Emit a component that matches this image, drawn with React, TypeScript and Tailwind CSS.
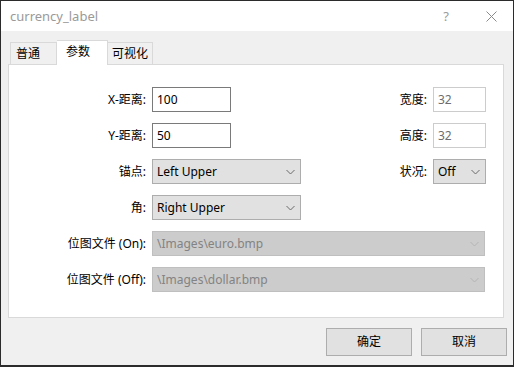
import React from 'react';

const Chevron: React.FC<{ disabled?: boolean }> = ({ disabled }) => (
  <svg width="9" height="6" viewBox="0 0 9 6" className="shrink-0">
    <path
      d="M0.5 1 L4.5 5 L8.5 1"
      fill="none"
      stroke={disabled ? '#b4b4b4' : '#6a6a6a'}
      strokeWidth="1"
    />
  </svg>
);

const Label: React.FC<{ text: string; className?: string }> = ({ text, className }) => (
  <div className={`text-right text-black ${className ?? ''}`}>{text}</div>
);

const TextBox: React.FC<{ value: string; width: string; disabled?: boolean }> = ({
  value,
  width,
  disabled,
}) => (
  <div
    className={`${width} h-[25px] flex items-center pl-[4px] bg-white border ${
      disabled ? 'border-[#cccccc] text-[#6d6d6d]' : 'border-[#7a7a7a] text-black'
    }`}
  >
    {value}
  </div>
);

const Combo: React.FC<{ value: string; width: string; disabled?: boolean }> = ({
  value,
  width,
  disabled,
}) => (
  <div
    className={`${width} h-[25px] flex items-center justify-between pl-[4px] pr-[5px] border ${
      disabled
        ? 'bg-[#cccccc] border-[#bfbfbf] text-[#838383]'
        : 'bg-[#e1e1e1] border-[#adadad] text-black'
    }`}
  >
    <span>{value}</span>
    <Chevron disabled={disabled} />
  </div>
);

const App: React.FC = () => {
  return (
    <div
      className="w-[514px] h-[367px] bg-[#2b2b2b] pl-px pt-px pr-[1px] pb-[2px] text-[12px] leading-none"
      style={{ fontFamily: '"Noto Sans", "Noto Sans CJK SC", sans-serif' }}
    >
      <div className="h-full flex flex-col bg-[#f0f0f0]">
        {/* title bar */}
        <div className="h-[30px] bg-white flex items-center pl-[9px] pr-[16px]">
          <span className="text-[#9a9a9a] text-[13px]">currency_label</span>
          <span className="ml-auto text-[#9a9a9a] text-[13px] mr-[37px]">?</span>
          <svg width="11" height="11" viewBox="0 0 11 11">
            <path d="M0.5 0.5 L10.5 10.5 M10.5 0.5 L0.5 10.5" stroke="#8a8a8a" strokeWidth="1" />
          </svg>
        </div>

        <div className="flex-1 pl-[7px] pr-[6px] pt-[9px] flex flex-col">
          {/* tabs */}
          <div className="flex items-end h-[24px] pl-[2px]">
            <div className="w-[47px] h-[22px] border border-b-0 border-[#d9d9d9] bg-[#f0f0f0] flex items-center pl-[5px] text-black">
              普通
            </div>
            <div className="w-[51px] h-[25px] -mb-px border border-b-0 border-l-0 border-[#d9d9d9] bg-white relative z-10 flex items-start pt-[5px] pl-[9px] text-black">
              参数
            </div>
            <div className="w-[45px] h-[22px] border border-b-0 border-l-0 border-[#d9d9d9] bg-[#f0f0f0] flex items-center pl-[4px] text-black">
              可视化
            </div>
          </div>

          {/* panel */}
          <div className="w-[496px] h-[254px] border border-[#d9d9d9] bg-white pt-[22px] pr-[17px] flex flex-col gap-[11px]">
            <div className="flex items-center h-[25px]">
              <Label text="X-距离:" className="w-[137px]" />
              <div className="ml-[6px]">
                <TextBox value="100" width="w-[79px]" />
              </div>
              <Label text="宽度:" className="ml-auto" />
              <div className="ml-[6px]">
                <TextBox value="32" width="w-[53px]" disabled />
              </div>
            </div>
            <div className="flex items-center h-[25px]">
              <Label text="Y-距离:" className="w-[137px]" />
              <div className="ml-[6px]">
                <TextBox value="50" width="w-[79px]" />
              </div>
              <Label text="高度:" className="ml-auto" />
              <div className="ml-[6px]">
                <TextBox value="32" width="w-[53px]" disabled />
              </div>
            </div>
            <div className="flex items-center h-[25px]">
              <Label text="锚点:" className="w-[137px]" />
              <div className="ml-[6px]">
                <Combo value="Left Upper" width="w-[149px]" />
              </div>
              <Label text="状况:" className="ml-auto" />
              <div className="ml-[6px]">
                <Combo value="Off" width="w-[53px]" />
              </div>
            </div>
            <div className="flex items-center h-[25px]">
              <Label text="角:" className="w-[137px]" />
              <div className="ml-[6px]">
                <Combo value="Right Upper" width="w-[149px]" />
              </div>
            </div>
            <div className="flex items-center h-[25px]">
              <Label text="位图文件 (On):" className="w-[137px]" />
              <div className="ml-[6px]">
                <Combo value="\Images\euro.bmp" width="w-[333px]" disabled />
              </div>
            </div>
            <div className="flex items-center h-[25px]">
              <Label text="位图文件 (Off):" className="w-[137px]" />
              <div className="ml-[6px]">
                <Combo value="\Images\dollar.bmp" width="w-[333px]" disabled />
              </div>
            </div>
          </div>

          {/* buttons */}
          <div className="flex justify-end gap-[9px] mt-[10px]">
            <button className="w-[86px] h-[28px] bg-[#e1e1e1] border border-[#adadad] text-black">
              确定
            </button>
            <button className="w-[86px] h-[28px] bg-[#e1e1e1] border border-[#adadad] text-black">
              取消
            </button>
          </div>
        </div>
      </div>
    </div>
  );
};

export default App;
